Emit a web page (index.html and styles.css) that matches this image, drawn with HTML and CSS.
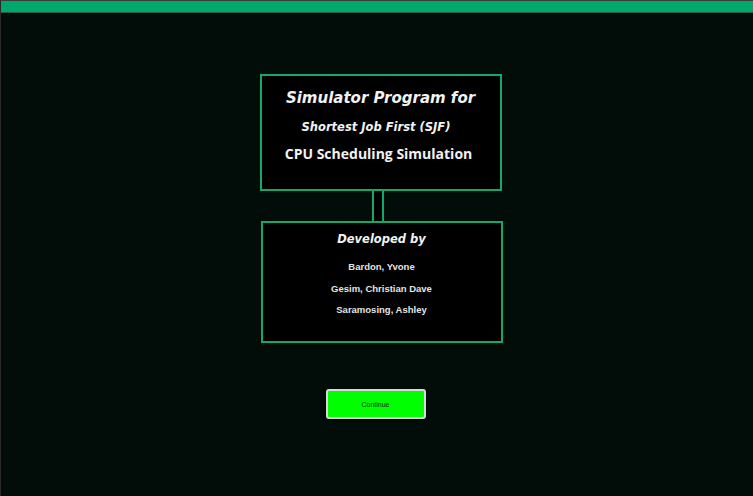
FILE: index.html
```html
<!DOCTYPE html>
<html>
<head>
<meta charset="utf-8">
<link rel="stylesheet" href="styles.css">
</head>
<body>
<div class="frame">
  <div class="topbar"></div>
  <main class="stage">
    <section class="card card-title">
      <h1 class="t1">Simulator Program for</h1>
      <h2 class="t2">Shortest Job First (SJF)</h2>
      <h3 class="t3">CPU Scheduling Simulation</h3>
    </section>
    <div class="connector"></div>
    <section class="card card-dev">
      <h2 class="dev">Developed by</h2>
      <p class="name">Bardon, Yvone</p>
      <p class="name">Gesim, Christian Dave</p>
      <p class="name">Saramosing, Ashley</p>
    </section>
    <button class="continue">Continue</button>
  </main>
</div>
</body>
</html>
```

FILE: styles.css
```css
html, body {
  margin: 0;
  padding: 0;
  width: 753px;
  height: 496px;
  overflow: hidden;
  background: #020c08;
}
.frame {
  box-sizing: border-box;
  width: 753px;
  height: 496px;
  border-top: 1px solid #3c3c3c;
  border-left: 1px solid #2a2a2a;
  display: flex;
  flex-direction: column;
}
.topbar {
  height: 11px;
  background: #00a86b;
  border-bottom: 1px solid #2d5a44;
}
.stage {
  display: flex;
  flex-direction: column;
  align-items: center;
  padding-top: 61px;
  padding-left: 9px;
  color: #f2f2f2;
  font-family: "DejaVu Sans", Verdana, sans-serif;
}
.card {
  box-sizing: border-box;
  background: #000;
  border: 2px solid #14a86c;
  text-align: center;
}
.card-title {
  width: 242px;
  height: 117px;
  margin-left: -2px;
  padding-top: 12px;
}
.t1 {
  margin: 0;
  font-size: 15px;
  font-weight: bold;
  font-style: italic;
  line-height: 20px;
}
.t2 {
  margin: 12px 0 0 -9px;
  font-size: 11.5px;
  font-weight: bold;
  font-style: italic;
  line-height: 14px;
}
.t3 {
  margin: 10px 0 0 -4px;
  font-size: 14px;
  font-weight: bold;
  line-height: 19px;
  font-family: "Open Sans", "DejaVu Sans", sans-serif;
}
.connector {
  box-sizing: border-box;
  width: 12px;
  height: 31px;
  margin-left: -7px;
  background: #000;
  border-left: 2px solid #14a86c;
  border-right: 2px solid #14a86c;
}
.card-dev {
  width: 242px;
  height: 122px;
  margin-left: 0;
  margin-top: -1px;
  padding-top: 8px;
}
.dev {
  margin: 0 0 9px;
  font-size: 11.5px;
  font-weight: bold;
  font-style: italic;
  line-height: 16px;
}
.name {
  margin: 0;
  font-family: "Liberation Sans", Arial, sans-serif;
  font-size: 9.5px;
  font-weight: bold;
  line-height: 21.5px;
  color: #e4e4e4;
}
.continue {
  box-sizing: border-box;
  margin-top: 46px;
  margin-left: -12px;
  width: 100px;
  height: 30px;
  background: #00ff00;
  border: 2px solid #d8d8d8;
  border-radius: 3px;
  font-family: "Liberation Sans", Arial, sans-serif;
  font-size: 7px;
  color: #0d2a0d;
  padding: 0;
}
```
